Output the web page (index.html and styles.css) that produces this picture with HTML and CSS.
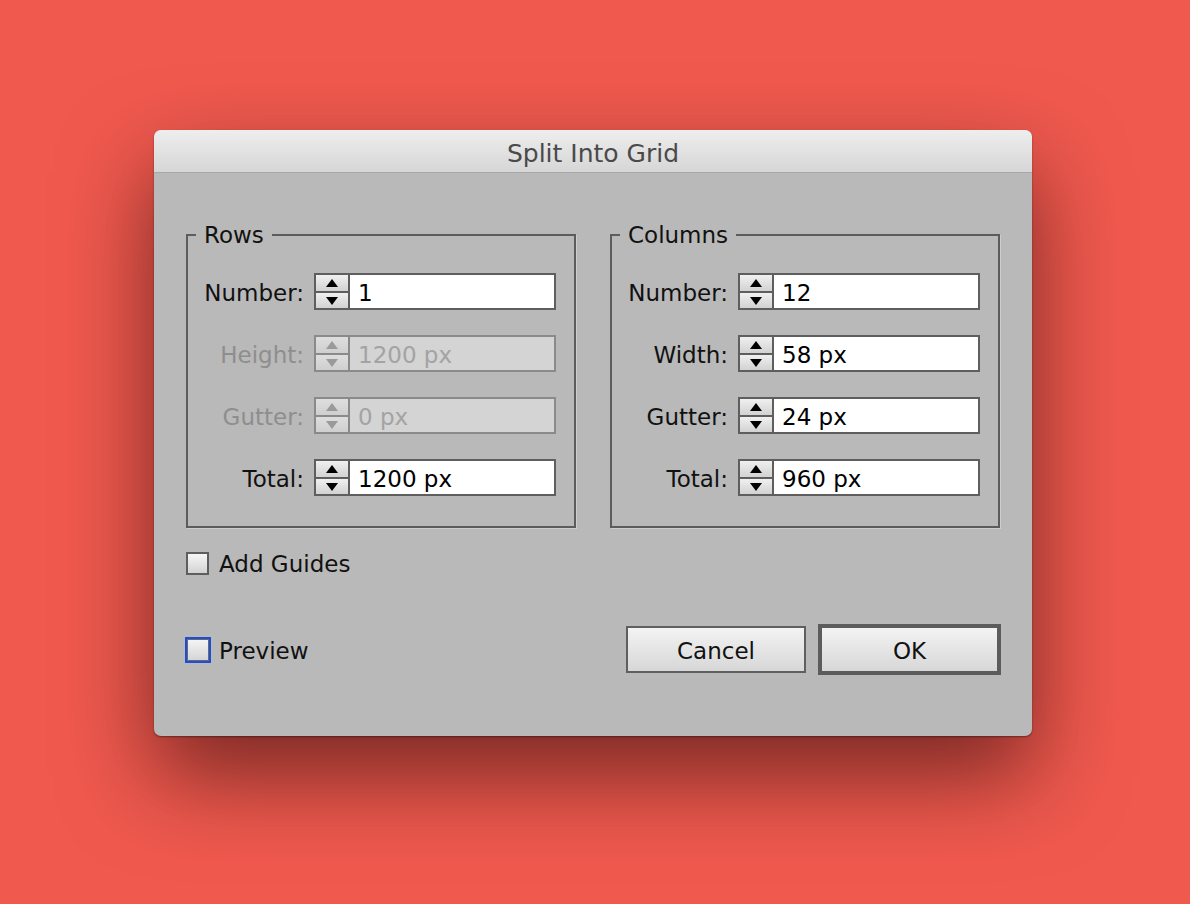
FILE: index.html
```html
<!DOCTYPE html>
<html>
<head>
<meta charset="utf-8">
<link rel="stylesheet" href="styles.css">
</head>
<body>
<div class="dialog">
  <div class="titlebar">Split Into Grid</div>
  <div class="content">
    <div class="groups">
      <fieldset class="group">
        <legend>Rows</legend>
        <div class="row">
          <span class="label">Number:</span>
          <div class="field"><div class="spin"><span class="up"></span><span class="down"></span></div><span class="value">1</span></div>
        </div>
        <div class="row disabled">
          <span class="label">Height:</span>
          <div class="field"><div class="spin"><span class="up"></span><span class="down"></span></div><span class="value">1200 px</span></div>
        </div>
        <div class="row disabled">
          <span class="label">Gutter:</span>
          <div class="field"><div class="spin"><span class="up"></span><span class="down"></span></div><span class="value">0 px</span></div>
        </div>
        <div class="row">
          <span class="label">Total:</span>
          <div class="field"><div class="spin"><span class="up"></span><span class="down"></span></div><span class="value">1200 px</span></div>
        </div>
      </fieldset>
      <fieldset class="group">
        <legend>Columns</legend>
        <div class="row">
          <span class="label">Number:</span>
          <div class="field"><div class="spin"><span class="up"></span><span class="down"></span></div><span class="value">12</span></div>
        </div>
        <div class="row">
          <span class="label">Width:</span>
          <div class="field"><div class="spin"><span class="up"></span><span class="down"></span></div><span class="value">58 px</span></div>
        </div>
        <div class="row">
          <span class="label">Gutter:</span>
          <div class="field"><div class="spin"><span class="up"></span><span class="down"></span></div><span class="value">24 px</span></div>
        </div>
        <div class="row">
          <span class="label">Total:</span>
          <div class="field"><div class="spin"><span class="up"></span><span class="down"></span></div><span class="value">960 px</span></div>
        </div>
      </fieldset>
    </div>
    <label class="check guides"><span class="box"></span><span>Add Guides</span></label>
    <div class="footer">
      <label class="check preview"><span class="box focus"></span><span>Preview</span></label>
      <div class="buttons">
        <button class="btn cancel">Cancel</button>
        <button class="btn ok">OK</button>
      </div>
    </div>
  </div>
</div>
</body>
</html>
```
FILE: styles.css
```css
html, body {
  margin: 0;
  padding: 0;
}
body {
  background: #f0594e;
  width: 1190px;
  height: 904px;
  overflow: hidden;
  font-family: "DejaVu Sans", Verdana, sans-serif;
  color: #111;
}
.dialog {
  margin: 130px 0 0 154px;
  width: 878px;
  height: 606px;
  background: #b9b9b9;
  border-radius: 7px;
  box-shadow: 0 40px 90px rgba(20, 0, 0, 0.55), 0 1px 2px rgba(0,0,0,0.4);
  overflow: hidden;
}
.titlebar {
  height: 42px;
  border-bottom: 1px solid #a8a8a8;
  background: linear-gradient(#eeeeee, #d6d6d6);
  text-align: center;
  font-size: 25px;
  line-height: 47px;
  color: #4a4a4a;
}
.content {
  padding: 50px 32px 0 32px;
}
.groups {
  display: flex;
  gap: 34px;
}
.group {
  margin: 0;
  width: 390px;
  box-sizing: border-box;
  border: 2px solid #5c5c5c;
  box-shadow: 1px 1px 0 #cdcdcd;
  padding: 26px 18px 30px 0;
  display: flex;
  flex-direction: column;
  gap: 25px;
  min-width: 0;
}
.group legend {
  margin-left: 8px;
  padding: 0 8px 0 8px;
  font-size: 23px;
  line-height: 24px;
  color: #111;
}
.row {
  display: flex;
  justify-content: flex-end;
  align-items: center;
  gap: 10px;
  height: 37px;
}
.label {
  font-size: 23px;
  color: #111;
  padding-top: 2px;
}
.field {
  width: 242px;
  height: 37px;
  box-sizing: border-box;
  border: 2px solid #5e5e5e;
  background: #fff;
  display: flex;
  align-items: stretch;
}
.spin {
  width: 32px;
  border-right: 2px solid #5e5e5e;
  display: flex;
  flex-direction: column;
}
.spin span {
  flex: 1;
  display: flex;
  align-items: center;
  justify-content: center;
  background: linear-gradient(#f0f0f0, #d2d2d2);
}
.spin .up {
  border-bottom: 2px solid #5e5e5e;
}
.spin .up::before {
  content: "";
  border-left: 6px solid transparent;
  border-right: 6px solid transparent;
  border-bottom: 8px solid #000;
  margin-top: 1px;
}
.spin .down::before {
  content: "";
  border-left: 6px solid transparent;
  border-right: 6px solid transparent;
  border-top: 8px solid #000;
  margin-top: 1px;
}
.value {
  padding-left: 8px;
  font-size: 23px;
  line-height: 37px;
  color: #000;
}
.disabled .label {
  color: #8e8e8e;
}
.disabled .field {
  border-color: #8a8a8a;
  background: #d4d4d4;
}
.disabled .spin {
  border-right-color: #8a8a8a;
}
.disabled .spin .up {
  border-bottom-color: #8a8a8a;
}
.disabled .spin span {
  background: linear-gradient(#dedede, #cfcfcf);
}
.disabled .spin .up::before {
  border-bottom-color: #9a9a9a;
}
.disabled .spin .down::before {
  border-top-color: #9a9a9a;
}
.disabled .value {
  color: #a3a3a3;
}
.check {
  display: flex;
  align-items: center;
  gap: 10px;
  font-size: 23px;
  color: #111;
}
.check span:last-child {
  padding-top: 2px;
}
.guides {
  margin-top: 21px;
}
.box {
  width: 23px;
  height: 23px;
  box-sizing: border-box;
  border: 2px solid #5e5e5e;
  background: linear-gradient(#f6f6f6, #d3d3d3);
}
.box.focus {
  width: 26px;
  height: 26px;
  border: 2px solid #1c4fd5;
  box-shadow: inset 0 0 0 1px #6a6a6a;
  margin-left: -1px;
  margin-right: -2px;
}
.footer {
  display: flex;
  justify-content: space-between;
  align-items: center;
  margin-top: 47px;
}
.buttons {
  display: flex;
  align-items: center;
  gap: 12px;
  margin-right: -1px;
}
.btn {
  font-family: "DejaVu Sans", Verdana, sans-serif;
  font-size: 23px;
  color: #111;
  background: linear-gradient(#f3f3f3, #d7d7d7);
  box-sizing: border-box;
  padding: 3px 0 0 0;
}
.cancel {
  width: 180px;
  height: 47px;
  border: 2px solid #5f5f5f;
}
.ok {
  width: 183px;
  height: 51px;
  border: 4px solid #5c5c5c;
}
```
